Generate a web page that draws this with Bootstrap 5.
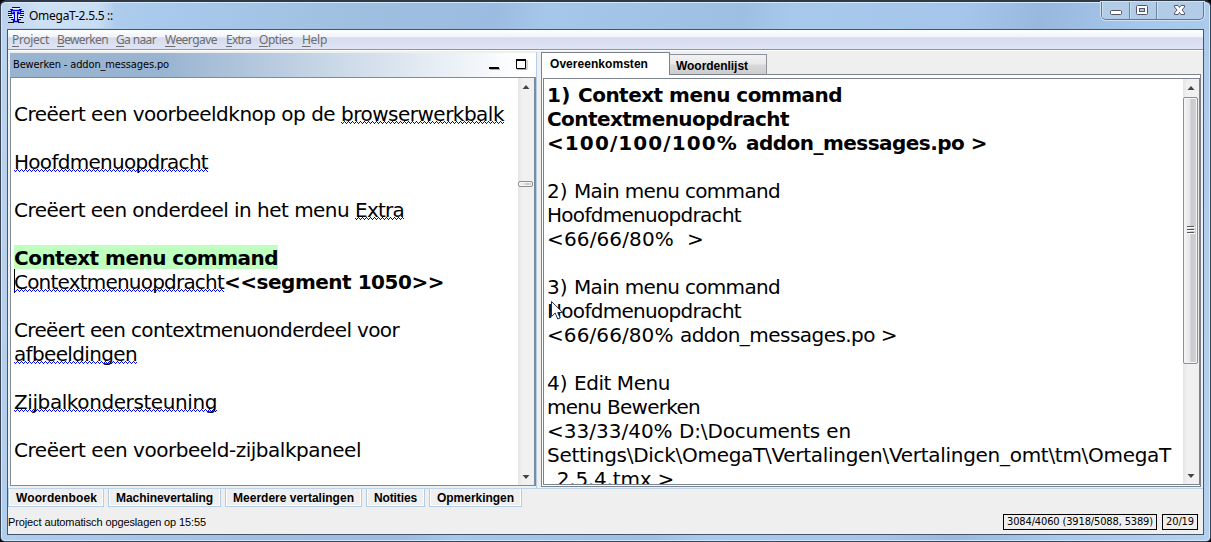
<!DOCTYPE html>
<html lang="nl">
<head>
<meta charset="utf-8">
<title>OmegaT-2.5.5</title>
<link rel="stylesheet" href="https://cdn.jsdelivr.net/npm/bootstrap@5.3.0/dist/css/bootstrap.min.css">
<style>
body{width:1211px;height:542px;overflow:hidden;background:#000;font-family:"Liberation Sans",sans-serif;color:#000}
svg{display:block;flex:none}
[data-w]{display:inline-block;white-space:pre;flex:none}
.win{height:542px;border:1px solid #3a4656;border-top-color:#2f3947;border-top-width:2px;border-radius:6px 6px 5px 5px;padding:0 6px 5px;background:linear-gradient(100deg,#bdd3ec 0,#a9caec 12%,#9fbfe1 28%,#9bbce0 38%,#a5c7ea 42%,#9dbfe2 57%,#a7c9ec 61%,#a5c6ea 74%,#98b9dd 80%,#a6c8ec 88%,#b4d0ee 100%);box-shadow:inset 0 0 0 1px #d5e8fa}
.titlebar{height:27px;padding:0 0 0 1px;font:12px "Noto Sans",sans-serif}
.glow{background:linear-gradient(90deg,rgba(225,238,250,.1),rgba(225,238,250,.55) 30%,rgba(225,238,250,.5) 85%,rgba(225,238,250,.1));height:26px}
.ctrls{height:18px;border:1px solid #5f7690;border-top:0;border-radius:0 0 5px 5px;box-shadow:0 0 0 1px #cfe2f6;width:103px;background:#b2cce8;overflow:hidden}
.ctrls div{border-left:1px solid #6d859f;height:18px;box-shadow:inset 1px 0 0 #cbdff3}
.ctrls div:first-child{border-left:0}
.client{height:506px;border:1px solid #46566a;background:#efefef}
.menus{height:20px;background:linear-gradient(#fff 0,#f1f4f9 35%,#e2e7f3 38%,#d6dbee 42%,#e0e5f5 100%);font:12px "Noto Sans",sans-serif;color:#6d6d6d;border-bottom:1px solid #8f959f;flex:none;padding:0 0 1px 4px}
.menus u{text-underline-offset:2px}
.work{height:439px;border-bottom:1px solid #bcd4ea;padding:2px 2px 0 2px;flex:none;background:#efefef;box-shadow:inset 0 1px #fff}
.leftpane{width:527px;border-right:1px solid #b4cde6}
.panehead{height:24px;margin-top:1px;background:linear-gradient(90deg,#99b4d1 0,#99b4d1 29%,#fff 97%);font:11px "DejaVu Sans Condensed",sans-serif}
.panehead span{margin:-2px 0 0 -1px}
.editor{width:526px;height:409px;border:1px solid #7f8a9b;border-right-width:2px;background:#fff;overflow:hidden}
.prose{font:20px/24px "DejaVu Sans",Verdana,sans-serif;overflow:hidden;font-weight:400}
.prose>div{height:24px;display:flex}
.prose b{font-weight:700}
.hl{background:linear-gradient(#bfffbf,#bfffbf) 0 0/100% 23px no-repeat;box-shadow:0 -1px #bfffbf}
.wavy{background:url("data:image/svg+xml,%3Csvg xmlns='http://www.w3.org/2000/svg' width='4' height='3' shape-rendering='crispEdges'%3E%3Cpath d='M0 1h1v1H0zM1 2h1v1H1zM2 1h1v1H2zM3 0h1v1H3z' fill='%230000ff'/%3E%3C/svg%3E") 0 19px/4px 3px repeat-x}
.caret{width:1px;height:24px;background:#000;margin:-1px -1px 0 0}
.sbar{width:16px;background:linear-gradient(90deg,#e6e6e6,#f1f1f1 30%,#f0f0f0);flex:none}
.thumb{width:15px;border:1px solid #8f8f8f;border-radius:2px;background:linear-gradient(90deg,#f5f5f5,#e6e6e8 45%,#c8c8cd 55%,#d2d2d6);box-shadow:inset 0 0 0 1px #f5f5f5}
.rightpane{width:660px;margin-left:4px}
.dtabs{height:23px;font:bold 12px "Liberation Sans",sans-serif}
.tabon{width:129px;height:23px;border:1px solid #7d8290;border-bottom:0;background:#fff;padding:4px 0 0 8px}
.taboff{width:97px;height:21px;border:1px solid #8d919b;border-left:0;background:linear-gradient(#f2f2f2 0,#e8e8e8 48%,#d8d8d8 52%,#cdcdcd);padding:4px 0 0 6px;align-self:end}
.tabline{border-bottom:1px solid #7d8290}
.rbox{height:412px;border:1px solid #7d8290;border-top:0;background:#fff;padding:3px 0 1px 1px}
.rinner{height:407px;border:1px solid #7d8290;overflow:hidden}
.dock{gap:4px;height:19px;font:bold 12px "Liberation Sans",sans-serif;flex:none}
.dockbtn{height:18px;border:1px solid #b4cde6;border-top:0;background:#efefef;box-shadow:inset 1px 0 #fff,inset -1px -1px #fff;line-height:19px;padding-left:7px}
.status{font-size:11px;padding:1px 5px 0 0;height:25px}
.cnt{border:1px solid #000;height:16px;font:11px/14px "DejaVu Sans Condensed",sans-serif;padding-left:3px}
.pointer{position:absolute;left:551px;top:301px}
</style>
</head>
<body>
<div class="win">
  <div class="titlebar d-flex align-items-start">
    <div class="glow d-flex align-items-center">
      <svg width="16" height="16" viewBox="0 0 16 16" fill="none"><path d="M4 1Q8-1 12 1l3 4v5l-4 4H5l-4-4V5z" fill="#eef5fc"/><path d="M0 15.500h6M10 15.500h6M4 .5h8M2 2.500h3M11 2.500h3M0 4.500h3M13 4.500h3M0 6.500h3M13 6.500h3M0 8.500h4M12 8.500h4M1 10.500h4M11 10.500h4M3 12.500h3M10 12.500h3" stroke="#111"/><path d="M3.500 3.500h9v3h-2v-1h-1v8h1v1h-5v-1h1v-8h-1v1h-2z" fill="#fff" stroke="#0000f0" stroke-width="1.300"/></svg>
      <span data-w="84" style="margin-left:5px">OmegaT-2.5.5 ::</span>
    </div>
    <div class="ctrls d-flex ms-auto me-0">
      <div style="width:28px"><svg width="27" height="18"><rect x="8.500" y="8.500" width="11" height="4" rx="1" fill="#fff" stroke="#555568"/></svg></div>
      <div style="width:27px"><svg width="26" height="18"><rect x="6.500" y="3.500" width="11" height="9" rx="1" fill="#fff" stroke="#555568"/><rect x="9.500" y="6.500" width="5" height="3" fill="#a9c6e6" stroke="#555568"/></svg></div>
      <div class="flex-fill"><svg width="46" height="18"><path d="M17.500 3.500h3.500l1.500 2 1.500-2h3.500v1.500l-2.500 3 2.500 3v1.500h-3.500l-1.500-2-1.500 2h-3.500V11l2.500-3-2.500-3z" fill="#fff" stroke="#555568"/></svg></div>
    </div>
  </div>
  <div class="client d-flex flex-column">
    <div class="menus d-flex align-items-center">
      <span data-w="37"><u>P</u>roject</span><span data-w="51" style="margin-left:8px"><u>B</u>ewerken</span><span data-w="40" style="margin-left:8px"><u>G</u>a naar</span><span data-w="52" style="margin-left:9px"><u>W</u>eergave</span><span data-w="25" style="margin-left:9px"><u>E</u>xtra</span><span data-w="34" style="margin-left:8px"><u>O</u>pties</span><span data-w="25" style="margin-left:9px"><u>H</u>elp</span>
    </div>
    <div class="work d-flex">
      <div class="leftpane">
        <div class="panehead d-flex align-items-center justify-content-between ps-1">
          <span data-w="156">Bewerken - addon_messages.po</span>
          <svg width="47" height="24"><path d="M1 15h10v2H1z" fill="#aaa"/><path d="M0 14h10v2H0z" fill="#000"/><path d="M28.500 7v9.500H38V7" fill="none" stroke="#aaa"/><path d="M27.500 7v8.500h9V7z" fill="#fff" stroke="#000"/><path d="M27 7h10" stroke="#000" stroke-width="2"/></svg>
        </div>
        <div class="editor d-flex">
          <div class="prose flex-fill" style="padding-left:3px">
            <div></div>
            <div><span data-w="327">Creëert een voorbeeldknop op de </span><span class="wavy" data-w="163">browserwerkbalk</span></div>
            <div></div>
            <div><span class="wavy" data-w="194">Hoofdmenuopdracht</span></div>
            <div></div>
            <div><span data-w="341">Creëert een onderdeel in het menu </span><span class="wavy" data-w="49">Extra</span></div>
            <div></div>
            <div><b class="hl" data-w="264">Context menu command</b></div>
            <div><i class="caret"></i><span class="wavy" data-w="210">Contextmenuopdracht</span><b data-w="220">&lt;&lt;segment 1050&gt;&gt;</b></div>
            <div></div>
            <div><span data-w="385">Creëert een contextmenuonderdeel voor</span></div>
            <div><span class="wavy" data-w="123">afbeeldingen</span></div>
            <div></div>
            <div><span class="wavy" data-w="203">Zijbalkondersteuning</span></div>
            <div></div>
            <div><span data-w="347">Creëert een voorbeeld-zijbalkpaneel</span></div>
          </div>
          <div class="sbar d-flex flex-column align-items-start">
            <svg width="16" height="17"><path d="M4.500 11l3.500-4 3.500 4z" fill="#444"/></svg>
            <div class="thumb" style="margin-top:86px;height:6px"></div>
            <svg class="mt-auto" width="16" height="17"><path d="M4.500 7h7l-3.500 4z" fill="#444"/></svg>
          </div>
        </div>
      </div>
      <div class="rightpane">
        <div class="dtabs d-flex">
          <div class="tabon"><span data-w="98">Overeenkomsten</span></div>
          <div class="taboff tabline"><span data-w="72">Woordenlijst</span></div>
          <div class="flex-fill tabline"></div>
        </div>
        <div class="rbox"><div class="rinner d-flex">
          <div class="prose flex-fill" style="padding:4px 0 0 3px">
            <div><b data-w="31">1) </b><b data-w="264">Context menu command</b></div>
            <div><b data-w="242">Contextmenuopdracht</b></div>
            <div><b data-w="199">&lt;100/100/100% </b><b data-w="241">addon_messages.po &gt;</b></div>
            <div></div>
            <div><span data-w="27">2) </span><span data-w="206">Main menu command</span></div>
            <div><span data-w="194">Hoofdmenuopdracht</span></div>
            <div><span data-w="140">&lt;66/66/80%  </span><span data-w="15">&gt;</span></div>
            <div></div>
            <div><span data-w="27">3) </span><span data-w="206">Main menu command</span></div>
            <div><span data-w="194">Hoofdmenuopdracht</span></div>
            <div><span data-w="133">&lt;66/66/80% </span><span data-w="217">addon_messages.po &gt;</span></div>
            <div></div>
            <div><span data-w="27">4) </span><span data-w="96">Edit Menu</span></div>
            <div><span data-w="153">menu Bewerken</span></div>
            <div><span data-w="132">&lt;33/33/40% </span><span data-w="172">D:\Documents en</span></div>
            <div><span data-w="624">Settings\Dick\OmegaT\Vertalingen\Vertalingen_omt\tm\OmegaT</span></div>
            <div><span data-w="127">_2.5.4.tmx &gt;</span></div>
          </div>
          <div class="sbar d-flex flex-column align-items-start">
            <svg width="16" height="18"><path d="M4.500 11l3.500-4 3.500 4z" fill="#444"/></svg>
            <div class="thumb d-flex align-items-center justify-content-center" style="height:267px"><svg width="8" height="9"><path d="M0 .5h7M0 3.500h7M0 6.500h7" stroke="#555"/><path d="M1 1.500h7M1 4.500h7M1 7.500h7" stroke="#fff"/></svg></div>
            <svg class="mt-auto" width="16" height="17"><path d="M4.500 7h7l-3.500 4z" fill="#444"/></svg>
          </div>
        </div></div>
      </div>
    </div>
    <div class="dock d-flex">
      <div class="dockbtn" style="width:96px"><span data-w="81">Woordenboek</span></div>
      <div class="dockbtn" style="width:113px"><span data-w="97">Machinevertaling</span></div>
      <div class="dockbtn" style="width:137px"><span data-w="121">Meerdere vertalingen</span></div>
      <div class="dockbtn" style="width:59px"><span data-w="43">Notities</span></div>
      <div class="dockbtn" style="width:93px"><span data-w="77">Opmerkingen</span></div>
    </div>
    <div class="status d-flex align-items-center mt-auto">
      <span data-w="198">Project automatisch opgeslagen op 15:55</span>
      <div class="cnt ms-auto" style="width:154px"><span data-w="146">3084/4060 (3918/5088, 5389)</span></div>
      <div class="cnt" style="width:36px;margin-left:5px"><span data-w="28">20/19</span></div>
    </div>
  </div>
</div>
<svg class="pointer" width="13" height="20"><path d="M.5.5v15l3.700-3.500 2.500 6 2.500-1-2.500-5.500h5z" fill="#fff" stroke="#222c48"/></svg>
<script src="https://cdn.jsdelivr.net/npm/bootstrap@5.3.0/dist/js/bootstrap.bundle.min.js"></script>
<script>
// Spread the tracking of each run over its nominal width in pixels.
document.querySelectorAll('[data-w]').forEach(function (el) {
  var w = +el.dataset.w, n = el.textContent.length;
  el.style.letterSpacing = ((w - el.getBoundingClientRect().width) / n) + 'px';
});
</script>
</body>
</html>
